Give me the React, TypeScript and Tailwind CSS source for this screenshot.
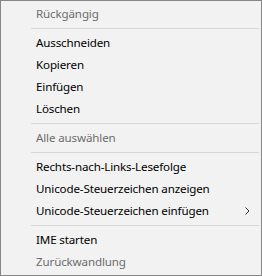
import { Fragment } from "react";

type Entry =
    | { kind: "item"; label: string; disabled?: boolean; submenu?: boolean }
    | { kind: "sep" };

const entries: Entry[] = [
    { kind: "item", label: "Rückgängig", disabled: true },
    { kind: "sep" },
    { kind: "item", label: "Ausschneiden" },
    { kind: "item", label: "Kopieren" },
    { kind: "item", label: "Einfügen" },
    { kind: "item", label: "Löschen" },
    { kind: "sep" },
    { kind: "item", label: "Alle auswählen", disabled: true },
    { kind: "sep" },
    { kind: "item", label: "Rechts-nach-Links-Lesefolge" },
    { kind: "item", label: "Unicode-Steuerzeichen anzeigen" },
    { kind: "item", label: "Unicode-Steuerzeichen einfügen", submenu: true },
    { kind: "sep" },
    { kind: "item", label: "IME starten" },
    { kind: "item", label: "Zurückwandlung", disabled: true },
];

function Chevron() {
    return (
        <svg width="5" height="8" viewBox="0 0 5 8" className="shrink-0" aria-hidden="true">
            <path d="M0.5 0.5 L4 4 L0.5 7.5" fill="none" stroke="#333" strokeWidth="1" />
        </svg>
    );
}

export default function App() {
    return (
        <div
            className="flex h-[276px] w-[262px] flex-col border border-[#868686] bg-[#f2f2f2] pt-[2px] pb-[2px] text-[11.6px] tracking-[-0.15px]"
            style={{ fontFamily: '"Noto Sans", "Open Sans", sans-serif' }}
        >
            {entries.map((e, i) => (
                <Fragment key={i}>
                    {e.kind === "sep" ? (
                        <div className="flex h-[7px] items-center pl-[30px] pr-[2px]">
                            <div className="h-px w-full bg-[#d7d7d7]" />
                        </div>
                    ) : (
                        <div
                            className={`flex h-[22px] items-center pl-[35px] pr-[11px] leading-none ${
                                e.disabled ? "text-[#6d6d6d]" : "text-black"
                            }`}
                        >
                            <span className="flex-1 whitespace-nowrap">{e.label}</span>
                            {e.submenu ? <Chevron /> : null}
                        </div>
                    )}
                </Fragment>
            ))}
        </div>
    );
}
